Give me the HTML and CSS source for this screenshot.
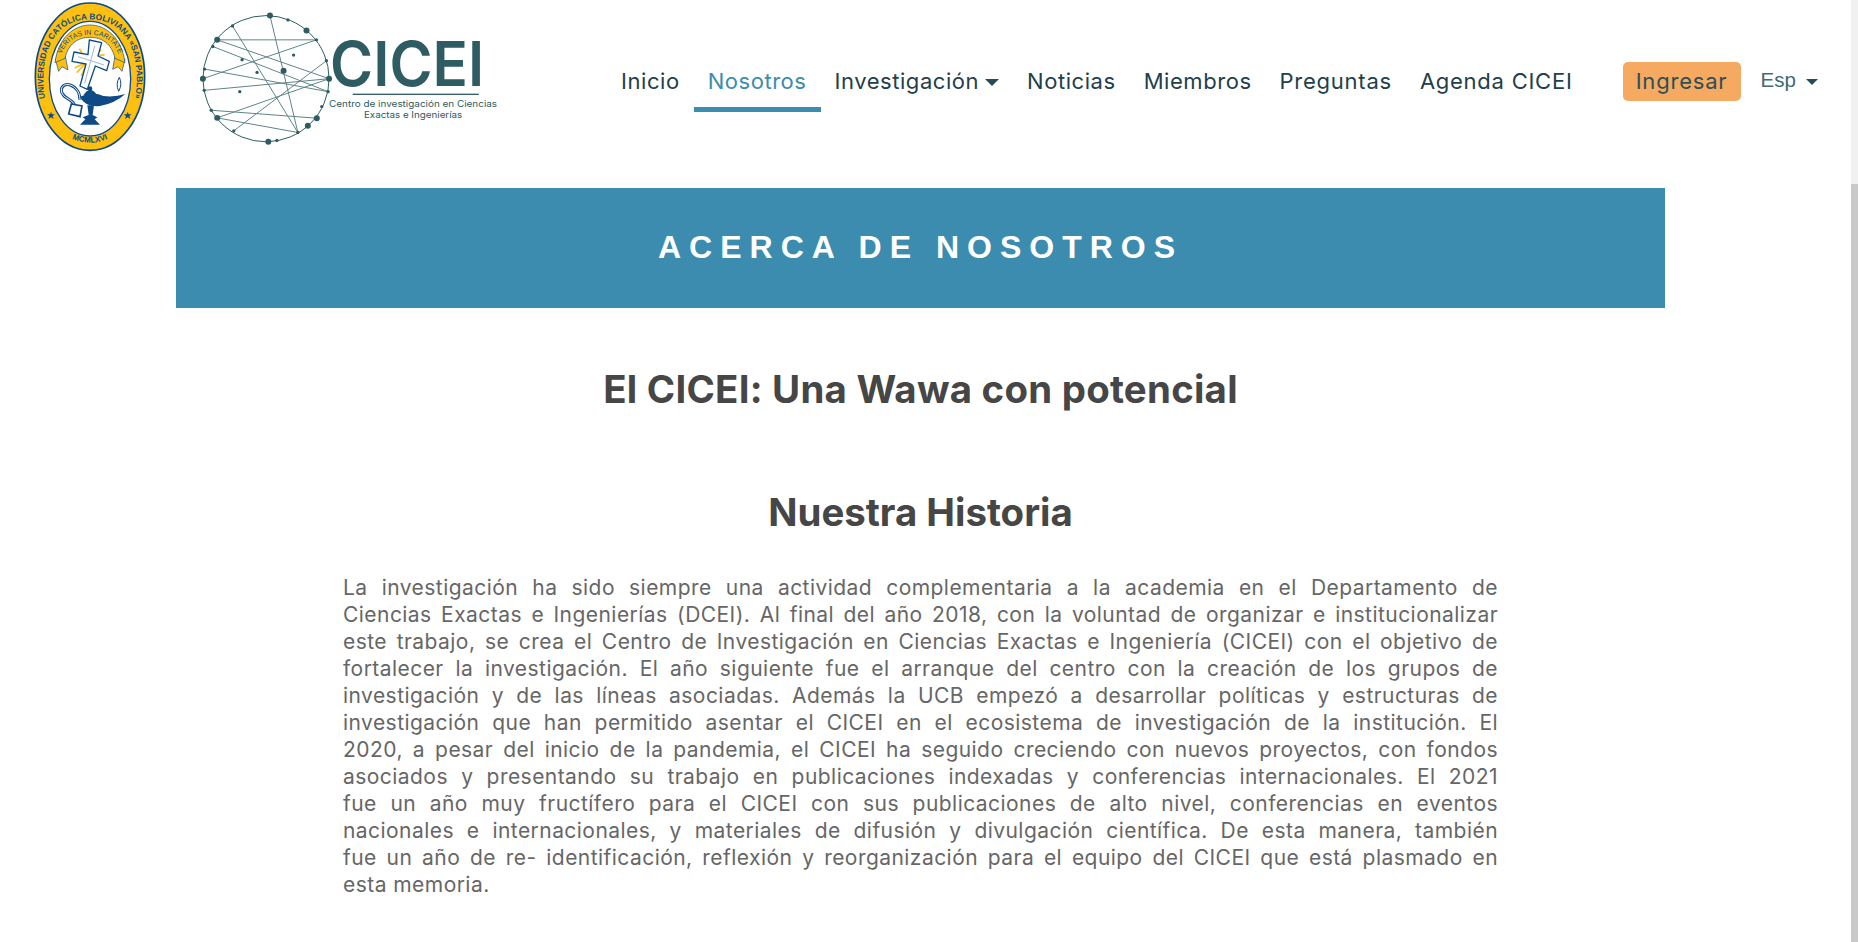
FILE: index.html

```html
<!DOCTYPE html>
<html lang="es">
<head>
  <meta charset="UTF-8" />
  <meta name="viewport" content="width=device-width, initial-scale=1" />
  <title>Nosotros - CICEI</title>
  <link rel="stylesheet" href="styles.css">
</head>
<body>
  <header class="topbar">
    <svg class="seal" viewBox="0 0 480 510" aria-label="Universidad Católica Boliviana">
      <defs>
        <path id="sealTop" d="M148 345 C108 230 128 58 270 58 C412 58 432 230 392 345" />
        <path id="sealBottom" d="M196 406 Q270 450 344 406" />
        <path id="sealBand" d="M181 172 C193 125 230 104 270 104 C310 104 347 125 359 172" />
      </defs>
      <ellipse cx="270" cy="230" rx="164" ry="221" fill="#fdc010" stroke="#0d4a86" stroke-width="5" />
      <ellipse cx="270" cy="236" rx="122" ry="172" fill="#fff" stroke="#0d4a86" stroke-width="4" />
      <text class="seal-ring"><textPath href="#sealTop" startOffset="50%" text-anchor="middle">UNIVERSIDAD CATÓLICA BOLIVIANA «SAN PABLO»</textPath></text>
      <text class="seal-year"><textPath href="#sealBottom" startOffset="50%" text-anchor="middle">MCMLXVI</textPath></text>
      <path d="M153 335 l3 8 9 0 -7 5 3 9 -8 -5 -8 5 3 -9 -7 -5 9 0z M383 335 l3 8 9 0 -7 5 3 9 -8 -5 -8 5 3 -9 -7 -5 9 0z" fill="#0d4a86" />
      <!-- cinta -->
      <path d="M166 178 L176 214 L186 200 L204 210 L196 168z M375 178 L366 214 L354 200 L338 208 L345 168z" fill="#fdc010" stroke="#0d4a86" stroke-width="2" />
      <path d="M165 188 C175 110 225 75 270 75 C315 75 365 110 375 188 L345 175 C335 130 305 112 270 112 C235 112 205 130 195 175z" fill="#fdc010" stroke="#0d4a86" stroke-width="2" />
      <text class="seal-band"><textPath href="#sealBand" startOffset="50%" text-anchor="middle">VERITAS IN CARITATE</textPath></text>
      <!-- rayos -->
      <g stroke="#fdc010" stroke-width="5">
        <path d="M262 185 L238 146 M262 185 L228 156 M262 185 L222 170 M262 185 L224 204 M262 185 L230 218 M262 185 L244 228 M278 170 L292 140 M278 170 L304 150 M278 170 L314 164 M278 170 L312 176" />
      </g>
      <!-- cruz -->
      <path d="M268 120 L305 128 L294 168 L328 184 L320 212 L286 198 L262 268 L240 258 L258 192 L216 184 L222 156 L264 164z" fill="#fff" stroke="#0d4a86" stroke-width="4" stroke-linejoin="round" />
      <path d="M284 138 L254 250 M234 170 L312 195" fill="none" stroke="#9db9d2" stroke-width="3" />
      <!-- lampara -->
      <path d="M240 300 C240 252 186 240 184 270 C184 298 226 296 224 322" fill="none" stroke="#0d4a86" stroke-width="9" />
      <path d="M240 300 C240 252 186 240 184 270 C184 298 226 296 224 322" fill="none" stroke="#fff" stroke-width="3" />
      <path d="M250 286 Q270 254 292 286z" fill="#0d4a86" />
      <circle cx="270" cy="266" r="7" fill="#0d4a86" />
      <path d="M240 290 Q280 272 310 288 Q345 292 376 282 Q345 310 300 318 Q255 322 240 290z" fill="#0d4a86" />
      <path d="M262 316 L282 316 L278 345 L292 352 L284 358 L300 374 L240 374 L256 358 L248 352 L266 345z" fill="#0d4a86" />
      <path d="M214 312 L246 318 L240 350 L206 342z" fill="#fff" stroke="#0d4a86" stroke-width="5" />
      <path d="M358 232 Q346 252 356 274 Q368 252 358 232z" fill="#fff" stroke="#0d4a86" stroke-width="3" />
    </svg>
    <svg class="logo" viewBox="0 0 1024 512" aria-label="CICEI">
      <circle cx="259" cy="237" r="190" fill="none" stroke="#2e5c62" stroke-width="3" />
      <g stroke="#5f8589" stroke-width="3">
        <line x1="271" y1="47" x2="355" y2="399" />
        <line x1="158" y1="78" x2="355" y2="399" />
        <line x1="112" y1="120" x2="411" y2="120" />
        <line x1="411" y1="120" x2="69" y2="237" />
        <line x1="99" y1="140" x2="446" y2="276" />
        <line x1="112" y1="120" x2="449" y2="237" />
        <line x1="74" y1="208" x2="446" y2="276" />
        <line x1="73" y1="272" x2="449" y2="237" />
        <line x1="441" y1="183" x2="162" y2="394" />
        <line x1="449" y1="237" x2="112" y2="355" />
        <line x1="94" y1="332" x2="412" y2="356" />
        <line x1="112" y1="355" x2="355" y2="399" />
      </g>
      <g fill="#2e5c62">
        <circle cx="271" cy="47" r="9" /><circle cx="381" cy="92" r="9" /><circle cx="112" cy="120" r="9" />
        <circle cx="69" cy="237" r="9" /><circle cx="312" cy="213" r="9" /><circle cx="449" cy="237" r="9" />
        <circle cx="112" cy="355" r="9" /><circle cx="412" cy="356" r="9" /><circle cx="385" cy="379" r="9" />
        <circle cx="266" cy="427" r="9" />
        <circle cx="325" cy="60" r="5" /><circle cx="158" cy="78" r="5" /><circle cx="411" cy="120" r="5" />
        <circle cx="99" cy="140" r="5" /><circle cx="441" cy="183" r="5" /><circle cx="74" cy="208" r="5" />
        <circle cx="187" cy="180" r="5" /><circle cx="342" cy="166" r="5" /><circle cx="232" cy="218" r="5" />
        <circle cx="73" cy="272" r="5" /><circle cx="180" cy="276" r="5" /><circle cx="446" cy="276" r="5" />
        <circle cx="427" cy="321" r="5" /><circle cx="94" cy="332" r="5" /><circle cx="162" cy="394" r="5" />
        <circle cx="355" cy="399" r="5" /><circle cx="292" cy="423" r="5" />
      </g>
      <text class="logo-name" x="452" y="258" textLength="464" lengthAdjust="spacingAndGlyphs">CICEI</text>
      <rect x="520" y="282" width="380" height="4" fill="#2e5c62" />
      <text class="logo-sub" x="702" y="321" text-anchor="middle" textLength="506" lengthAdjust="spacingAndGlyphs">Centro de investigación en Ciencias</text>
      <text class="logo-sub" x="702" y="356" text-anchor="middle" textLength="296" lengthAdjust="spacingAndGlyphs">Exactas e Ingenierías</text>
    </svg>
    <nav class="menu">
      <a href="#">Inicio</a>
      <a href="#" class="active">Nosotros</a>
      <a href="#">Investigación<span class="caret"></span></a>
      <a href="#">Noticias</a>
      <a href="#">Miembros</a>
      <a href="#" class="wide">Preguntas</a>
      <a href="#" class="wide">Agenda CICEI</a>
    </nav>
    <a href="#" class="login">Ingresar</a>
    <div class="lang">Esp <span class="caret"></span></div>
  </header>

  <main class="content">
    <h1 class="banner">ACERCA DE NOSOTROS</h1>
    <h2 class="slogan">El CICEI: Una Wawa con potencial</h2>
    <h2 class="section-title">Nuestra Historia</h2>
    <p class="history">
      <span class="line">La investigación ha sido siempre una actividad complementaria a la academia en el Departamento de</span>
      <span class="line">Ciencias Exactas e Ingenierías (DCEI). Al final del año 2018, con la voluntad de organizar e institucionalizar</span>
      <span class="line">este trabajo, se crea el Centro de Investigación en Ciencias Exactas e Ingeniería (CICEI) con el objetivo de</span>
      <span class="line">fortalecer la investigación. El año siguiente fue el arranque del centro con la creación de los grupos de</span>
      <span class="line">investigación y de las líneas asociadas. Además la UCB empezó a desarrollar políticas y estructuras de</span>
      <span class="line">investigación que han permitido asentar el CICEI en el ecosistema de investigación de la institución. El</span>
      <span class="line">2020, a pesar del inicio de la pandemia, el CICEI ha seguido creciendo con nuevos proyectos, con fondos</span>
      <span class="line">asociados y presentando su trabajo en publicaciones indexadas y conferencias internacionales. El 2021</span>
      <span class="line">fue un año muy fructífero para el CICEI con sus publicaciones de alto nivel, conferencias en eventos</span>
      <span class="line">nacionales e internacionales, y materiales de difusión y divulgación científica. De esta manera, también</span>
      <span class="line">fue un año de re- identificación, reflexión y reorganización para el equipo del CICEI que está plasmado en</span>
      <span>esta memoria.</span>
    </p>
  </main>

  <div class="scrollbar"><div class="scrollbar-thumb"></div></div>
</body>
</html>
```

FILE: styles.css

```css
html, body {
  height: 100%;
}
body {
  margin: 0;
  font-family: 'Inter', 'Noto Sans', sans-serif;
  background-color: #fff;
  overflow: hidden;
}
.topbar {
  display: flex;
  align-items: flex-start;
  height: 188px;
}
.seal {
  width: 160px;
  height: 170px;
  flex-shrink: 0;
}
.seal-ring {
  font-family: 'Liberation Sans', sans-serif;
  font-weight: 700;
  font-size: 25px;
  fill: #0d4a86;
}
.seal-year {
  font-family: 'Liberation Sans', sans-serif;
  font-weight: 700;
  font-size: 24px;
  fill: #0d4a86;
}
.seal-band {
  font-family: 'Liberation Sans', sans-serif;
  font-size: 21px;
  fill: #0d4a86;
}
.logo {
  width: 340px;
  height: 170px;
  margin-left: 20px;
  flex-shrink: 0;
}
.logo-name {
  font-family: 'Inter', sans-serif;
  font-size: 186px;
  font-weight: 600;
  fill: #2e5c62;
}
.logo-sub {
  font-family: 'Inter', sans-serif;
  font-size: 27px;
  fill: #2e5c62;
}
.menu {
  display: flex;
  margin-left: 87px;
  margin-top: 61px;
}
.menu a {
  color: #22404a;
  text-decoration: none;
  font-size: 22px;
  letter-spacing: 0.55px;
  line-height: 30px;
  padding: 5px 14px 11px;
  border-bottom: 5px solid transparent;
  white-space: nowrap;
}
.menu a.wide {
  letter-spacing: 0.75px;
}
.menu a.active {
  color: #3c8caf;
  border-bottom-color: #3c8caf;
}
.caret {
  display: inline-block;
  border-top: 7px solid #264d54;
  border-left: 7px solid transparent;
  border-right: 7px solid transparent;
  vertical-align: 3px;
  margin-left: 6px;
}
.login {
  margin-left: 36px;
  margin-top: 62px;
  width: 118px;
  height: 39px;
  line-height: 39px;
  text-align: center;
  background-color: #f6a960;
  color: #2e4f57;
  border-radius: 5px;
  font-size: 22px;
  letter-spacing: 0.8px;
  text-decoration: none;
}
.lang {
  margin-left: 20px;
  margin-top: 68px;
  font-family: 'Liberation Sans', sans-serif;
  font-size: 20.5px;
  color: #3f6c74;
}
.lang .caret {
  margin-left: 4px;
  border-top-width: 6px;
  border-left-width: 6px;
  border-right-width: 6px;
  vertical-align: 2px;
}
.content {
  width: 1489px;
  margin-left: 176px;
}
.banner {
  margin: 0;
  height: 120px;
  line-height: 118px;
  background-color: #3c8caf;
  color: #fff;
  text-align: center;
  font-family: 'Liberation Sans', sans-serif;
  font-size: 32px;
  font-weight: 700;
  letter-spacing: 8px;
}
.slogan, .section-title {
  margin: 0;
  text-align: center;
  color: #464646;
  font-size: 38.4px;
  font-weight: 700;
  line-height: 44px;
}
.slogan {
  margin-top: 59px;
  letter-spacing: 0.25px;
}
.section-title {
  margin-top: 79px;
}
.history {
  width: 1155px;
  margin: 40px auto 0;
  color: #666;
  font-size: 21px;
  line-height: 27px;
  letter-spacing: 0.45px;
  text-align: justify;
}
.line {
  display: block;
  white-space: nowrap;
  text-align-last: justify;
}
.scrollbar {
  position: absolute;
  top: 0;
  right: 0;
  bottom: 0;
  width: 7px;
  background-color: #f1f1f1;
}
.scrollbar-thumb {
  position: absolute;
  top: 184px;
  left: 0;
  right: 0;
  bottom: 0;
  background-color: #c9c9c9;
}
```
